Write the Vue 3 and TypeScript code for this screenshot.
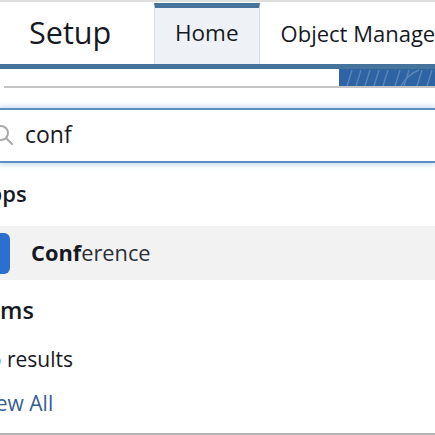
<script setup lang="ts">
const stripes = [0, 9, 18, 27, 36, 48, 57, 70, 80];
</script>

<template>
  <div class="page">
    <header class="header">
      <div class="title">Setup</div>
      <nav class="tabs">
        <div class="tab active">Home</div>
        <div class="tab plain">Object Manager</div>
      </nav>
    </header>
    <div class="band">
      <div class="band-card"></div>
      <div class="banner">
        <svg width="96" height="17" viewBox="0 0 96 17" fill="none" stroke="#5a85b8" stroke-width="1.4">
          <path v-for="x in stripes" :key="x" :d="`M${x + 8} 17 L${x + 13} 1`" />
          <path d="M62 17 C66 10 72 4 80 1" />
        </svg>
      </div>
    </div>
    <div class="search">
      <svg class="lens" width="20" height="20" viewBox="0 0 20 20" fill="none" stroke="#a9a9a9" stroke-width="2">
        <circle cx="1" cy="8" r="7" />
        <path d="M6 13 L12 19" stroke-linecap="round" />
      </svg>
      <span>conf</span>
    </div>
    <section class="results">
      <h2 class="heading apps">Apps</h2>
      <div class="row">
        <div class="app-icon"></div>
        <div class="app-name"><b>Conf</b>erence</div>
      </div>
      <h2 class="heading items">Items</h2>
      <div class="none">No results</div>
      <a class="view">View All</a>
    </section>
  </div>
</template>

<style scoped>
.page {
  width: 435px;
  height: 435px;
  overflow: hidden;
  position: relative;
  box-sizing: border-box;
  background: #fff;
  color: #16191f;
  font-family: "Open Sans", "Noto Sans", sans-serif;
  display: flex;
  flex-direction: column;
  border-top: 2px solid #dfdfdf;
  border-bottom: 2px solid #b4b4b4;
}
.header {
  display: flex;
  height: 62px;
  flex: none;
  border-bottom: 5px solid #44749c;
  box-sizing: content-box;
}
.title {
  width: 154px;
  box-sizing: border-box;
  padding: 8px 0 0 29px;
  font-size: 30.6px;
  line-height: 44px;
}
.tabs {
  display: flex;
  flex: 1;
  min-width: 0;
}
.tab {
  padding: 9px 20px 0;
  font-size: 22.5px;
  line-height: 32px;
  white-space: nowrap;
}
.tab.plain {
  padding: 15px 21px 0;
  font-size: 22px;
}
.tab.active {
  width: 106px;
  box-sizing: border-box;
  background: #eef2f6;
  border-top: 5px solid #44749c;
  border-left: 1px solid #d8dde3;
  border-right: 1px solid #d8dde3;
  margin-top: 1px;
}
.band {
  display: flex;
  flex: none;
  height: 17px;
  border-bottom: 2px solid #c4c4c4;
  margin-left: 4px;
}
.band-card {
  flex: 1;
  background: #fff;
}
.banner {
  width: 96px;
  background: #2f64a4;
}
.search {
  margin-top: 20px;
  height: 55px;
  flex: none;
  box-sizing: border-box;
  border-top: 2px solid #5f8fc0;
  border-bottom: 2px solid #5f8fc0;
  box-shadow: 0 0 6px 1px #b9d4f0;
  display: flex;
  align-items: center;
  padding: 0 0 3px 25px;
  font-size: 23px;
  position: relative;
}
.lens {
  position: absolute;
  left: 0;
  top: 15px;
}
.results {
  display: flex;
  flex-direction: column;
}
.heading {
  margin: 0;
  font-size: 22px;
  font-weight: 600;
  line-height: 30px;
}
.apps {
  margin-left: -26px;
  margin-top: 15px;
}
.row {
  margin-top: 18px;
  height: 54px;
  background: #f2f2f2;
  display: flex;
  align-items: center;
}
.app-icon {
  width: 40px;
  height: 41px;
  margin-left: -30px;
  border-radius: 6px;
  background: #2b6fd1;
}
.app-name {
  margin-left: 21px;
  padding-bottom: 1px;
  font-size: 21.8px;
  color: #2b2f36;
}
.app-name b {
  font-weight: 700;
  color: #16191f;
}
.items {
  margin-left: -30px;
  margin-top: 15px;
  font-size: 23.5px;
}
.none {
  margin-left: -27px;
  margin-top: 19px;
  font-size: 21px;
  line-height: 30px;
}
.view {
  margin-left: -22px;
  margin-top: 14px;
  font-size: 21px;
  line-height: 30px;
  color: #335f96;
}
</style>
